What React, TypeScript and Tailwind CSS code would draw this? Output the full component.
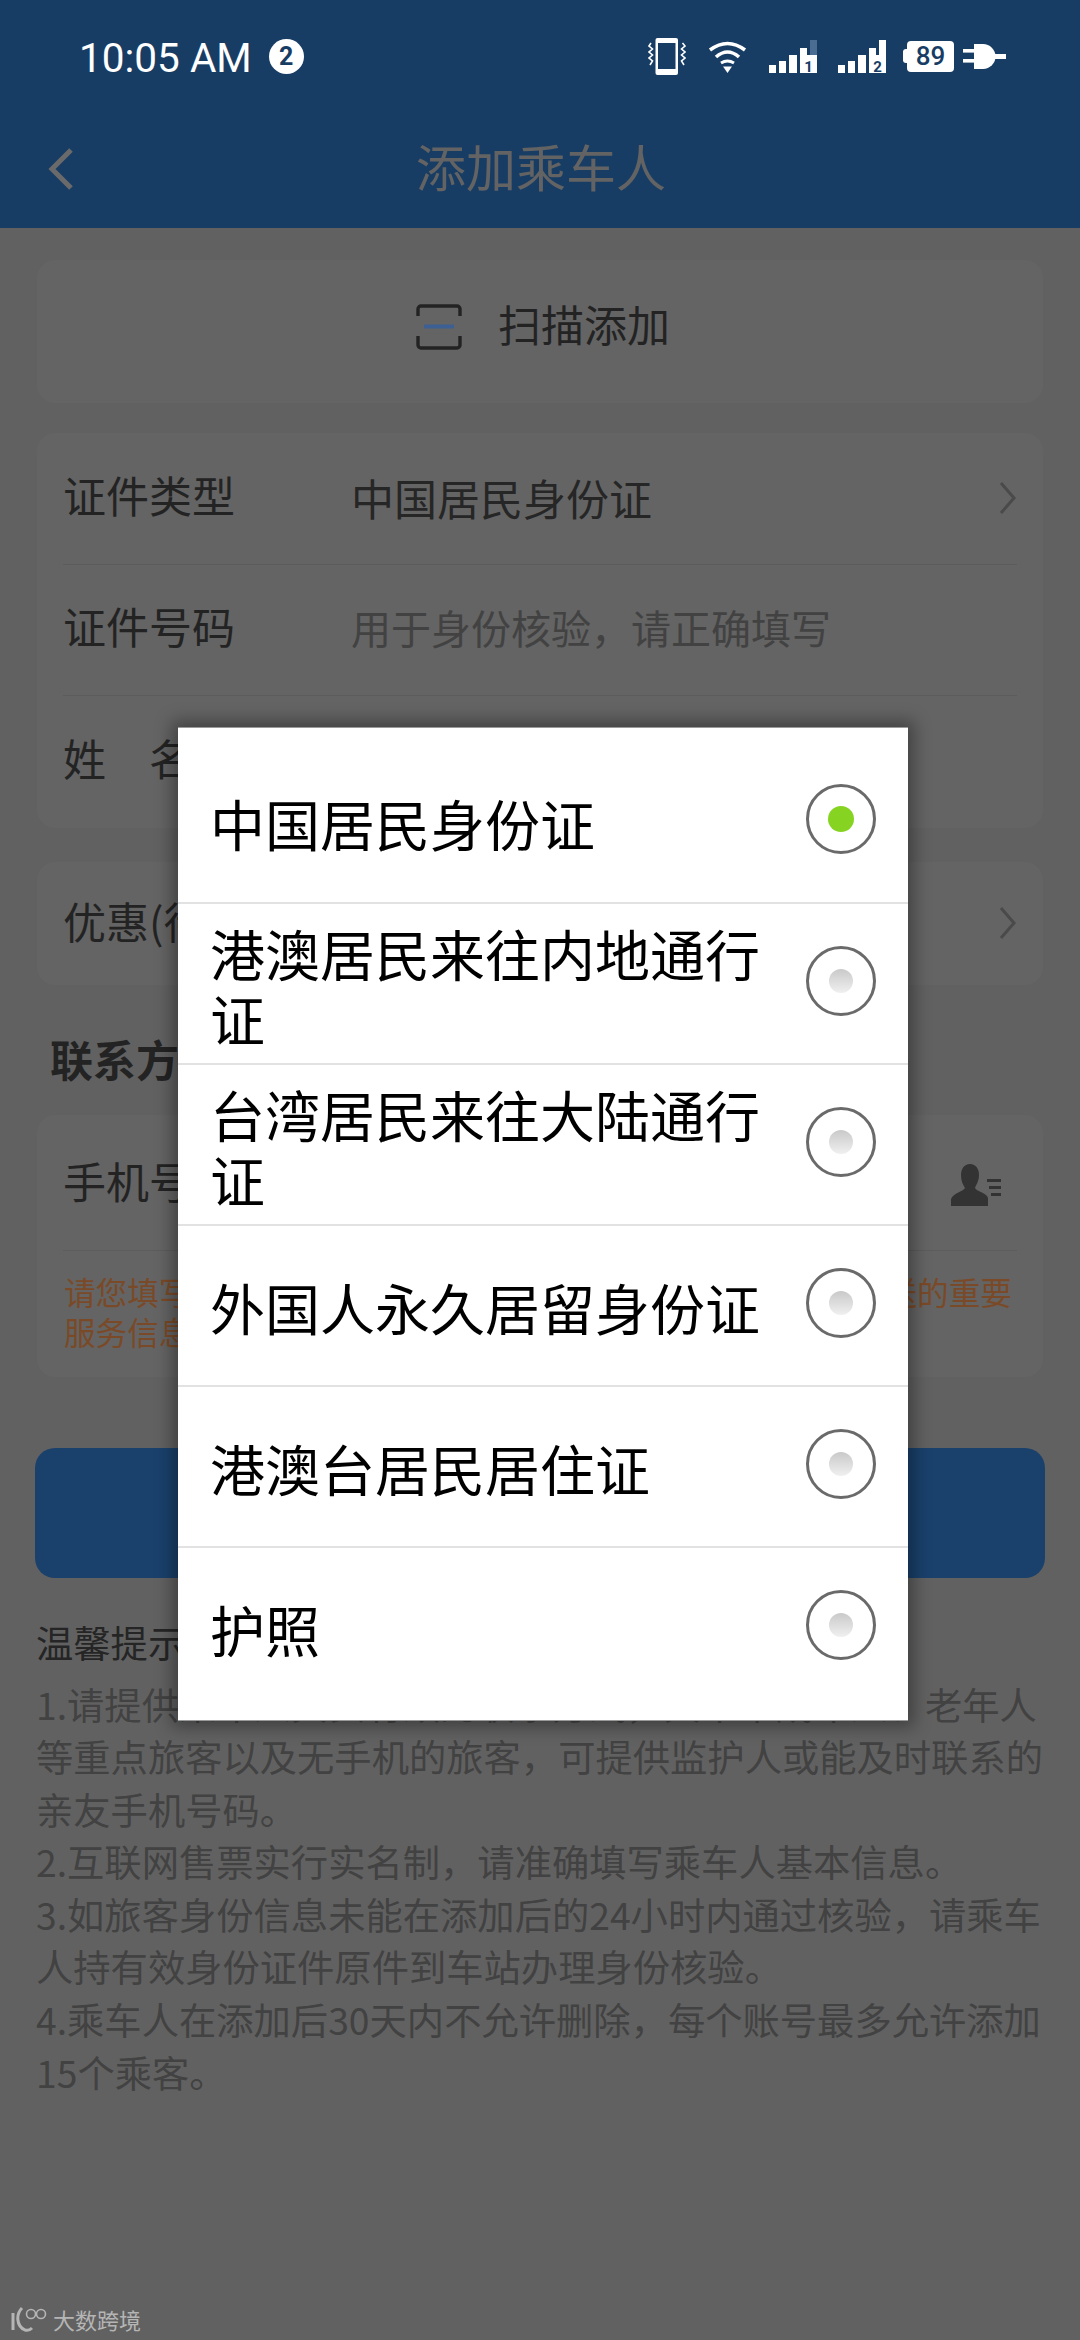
const cjk = "font-['Noto_Sans_CJK_SC','Noto_Sans',sans-serif]";

const idTypes = [
  "中国居民身份证",
  "港澳居民来往内地通行证",
  "台湾居民来往大陆通行证",
  "外国人永久居留身份证",
  "港澳台居民居住证",
  "护照",
];

const tips = [
  "1.请提供乘车人真实有效的联系方式，其中未成年人、老年人等重点旅客以及无手机的旅客，可提供监护人或能及时联系的亲友手机号码。",
  "2.互联网售票实行实名制，请准确填写乘车人基本信息。",
  "3.如旅客身份信息未能在添加后的24小时内通过核验，请乘车人持有效身份证件原件到车站办理身份核验。",
  "4.乘车人在添加后30天内不允许删除，每个账号最多允许添加15个乘客。",
];

function VibrateIcon() {
  return (
    <svg width="38" height="37" viewBox="0 0 38 37" fill="none">
      <rect x="7.5" y="0" width="22.5" height="37" rx="2" fill="#fff" />
      <rect x="10" y="5" width="17.5" height="26" fill="#183d65" />
      <path d="M3 5 L1 8 L4.5 11 L1 14 L4.5 17 L1 20 L4.5 23 L2 27" stroke="#fff" strokeWidth="1.6" />
      <path d="M34.5 5 L37 8 L33.5 11 L37 14 L33.5 17 L37 20 L33.5 23 L36 27" stroke="#fff" strokeWidth="1.6" />
    </svg>
  );
}

function WifiIcon() {
  return (
    <svg width="39" height="33" viewBox="0 0 39 33" fill="none" stroke="#fff" strokeWidth="3.6">
      <path d="M2 10 Q19.5 -3 37 10" />
      <path d="M8 17 Q19.5 7 31 17" />
      <path d="M13 23 Q19.5 19 26 23" strokeWidth="3" />
      <path d="M15 26.5 H24 L19.5 33 Z" fill="#fff" stroke="none" />
    </svg>
  );
}

function SignalIcon({ sim, dim }: { sim: string; dim?: boolean }) {
  return (
    <svg width="48" height="33" viewBox="0 0 48 33">
      <rect x="0" y="25" width="7" height="8" fill="#fff" />
      <rect x="10" y="21" width="7" height="12" fill="#fff" />
      <rect x="20" y="15" width="8" height="18" fill="#fff" />
      <rect x="31" y="8" width="7" height="9" fill="#fff" />
      <rect x="41" y="0" width="7" height="17" fill={dim ? "#4b6d92" : "#fff"} />
      <rect x="31" y="15" width="17" height="18" fill="#fff" />
      <text x="39.5" y="31.5" textAnchor="middle" fontSize="15" fontWeight="700" fontFamily="Roboto, sans-serif" fill="#183d65">
        {sim}
      </text>
    </svg>
  );
}

function PlugIcon() {
  return (
    <svg width="43" height="25" viewBox="0 0 43 25" fill="#fff">
      <rect x="0" y="5" width="12" height="3.6" />
      <rect x="0" y="15" width="12" height="3.6" />
      <path d="M11 0 H20 A12.5 12.5 0 0 1 20 25 H11 Z" />
      <rect x="31" y="10" width="12" height="5" />
    </svg>
  );
}

function Chevron() {
  return (
    <svg width="18" height="32" viewBox="0 0 18 32" fill="none" stroke="#4a4a4a" strokeWidth="3">
      <path d="M2 1 L15 16 L2 31" />
    </svg>
  );
}

function ScanIcon() {
  return (
    <svg width="46" height="46" viewBox="0 0 46 46" fill="none">
      <path d="M2 12 V5 A3 3 0 0 1 5 2 H41 A3 3 0 0 1 44 5 V12" stroke="#232323" strokeWidth="3.4" />
      <path d="M2 32 V41 A3 3 0 0 0 5 44 H41 A3 3 0 0 0 44 41 V32" stroke="#232323" strokeWidth="3.4" />
      <rect x="8" y="20.5" width="30" height="4" fill="#3c5f94" />
    </svg>
  );
}

function ContactIcon() {
  return (
    <svg width="52" height="42" viewBox="0 0 52 42" fill="#333">
      <path d="M19 0 C25 0 28 5 28 11 C28 17 25 21 24 24 C25 27 36 29 37 34 L37 42 H0 L0 35 C2 29 13 27 14 24 C12 21 10 17 10 11 C10 5 13 0 19 0 Z" />
      <rect x="36" y="15" width="14" height="3" />
      <rect x="38" y="22" width="12" height="3" />
      <rect x="40" y="29" width="10" height="3" />
    </svg>
  );
}

function WatermarkLogo() {
  return (
    <svg width="38" height="26" viewBox="0 0 38 26" fill="none" stroke="#b5b5b5">
      <path d="M3 7 V24" strokeWidth="3" />
      <path d="M12 2 C6 8 6 20 15 24 C18 25 20 24 22 22" strokeWidth="3" />
      <circle cx="21" cy="8" r="4.5" strokeWidth="1.6" />
      <circle cx="31" cy="8" r="4.5" strokeWidth="1.6" />
    </svg>
  );
}

function Row({ label, value, valueClass, chevron, last }: { label: string; value?: string; valueClass?: string; chevron?: boolean; last?: boolean }) {
  return (
    <div className={`mx-[26px] flex h-[131.5px] items-center ${last ? "" : "border-b border-[#5c5c5c]"}`}>
      <span className="mb-[8px] w-[288px] shrink-0 text-[43px] leading-none text-[#232323]">{label}</span>
      <span className={`flex-1 leading-none ${valueClass ?? "mb-[2px] text-[43px] text-[#262626]"}`}>{value}</span>
      {chevron && <Chevron />}
    </div>
  );
}

function Radio({ checked }: { checked?: boolean }) {
  return (
    <div className="mb-[6px] flex h-[70px] w-[70px] shrink-0 items-center justify-center rounded-full border-[3px] border-[#6a6a6a] bg-white">
      {checked ? (
        <div className="h-[26px] w-[26px] rounded-full bg-[#86d322]" />
      ) : (
        <div className="h-[24px] w-[24px] rounded-full bg-gradient-to-b from-[#c9c9c9] to-[#f0f0f0]" />
      )}
    </div>
  );
}

export default function App() {
  return (
    <div className={`relative h-[2340px] w-[1080px] overflow-hidden bg-[#616161] ${cjk}`}>
      <header className="h-[228px] bg-[#183d65]">
        <div className="flex h-[112px] items-center pl-[79px] pr-[74px]">
          <span className="mt-[4px] font-['Roboto',sans-serif] text-[40.5px] leading-none text-white">10:05 AM</span>
          <span className="ml-[17px] flex h-[35px] w-[35px] items-center justify-center rounded-full bg-white font-['Roboto',sans-serif] text-[25px] font-bold leading-none text-[#183d65]">
            2
          </span>
          <div className="ml-auto flex items-center">
            <VibrateIcon />
            <div className="ml-[22px]">
              <WifiIcon />
            </div>
            <div className="ml-[22px]">
              <SignalIcon sim="1" dim />
            </div>
            <div className="ml-[21px]">
              <SignalIcon sim="2" />
            </div>
            <div className="ml-[17px] flex items-center">
              <div className="h-[14px] w-[4px] rounded-l-[3px] bg-white" />
              <div className="flex h-[31px] w-[47px] items-center justify-center rounded-[4px] bg-white font-['Roboto',sans-serif] text-[26px] font-medium leading-none text-[#183d65]">
                89
              </div>
            </div>
            <div className="ml-[9px]">
              <PlugIcon />
            </div>
          </div>
        </div>
        <div className="grid h-[116px] grid-cols-[1fr_auto_1fr] items-center pl-[48px]">
          <svg width="26" height="42" viewBox="0 0 26 42" fill="none" stroke="#6a6a6a" strokeWidth="5" className="mb-[3px]">
            <path d="M23 2 L4 21 L23 40" />
          </svg>
          <h1 className="mb-[11px] pr-[46px] text-[50px] font-normal leading-none text-[#636363]">添加乘车人</h1>
          <div />
        </div>
      </header>

      <main className="flex flex-col px-[37px] pt-[32px]">
        <div className="flex h-[143px] items-center justify-center gap-[36px] rounded-[18px] bg-[#646464] pb-[10px] pl-[6px]">
          <ScanIcon />
          <span className="mb-[7px] text-[43px] leading-none text-[#232323]">扫描添加</span>
        </div>

        <section className="mt-[30px] rounded-[18px] bg-[#646464]">
          <Row label="证件类型" value="中国居民身份证" chevron />
          <Row label="证件号码" value="用于身份核验，请正确填写" valueClass="mb-[6px] text-[40px] text-[#424242]" />
          <Row label="姓　名" last />
        </section>

        <div className="mt-[34px] flex h-[123px] items-center rounded-[18px] bg-[#646464] px-[26px]">
          <span className="mb-[5px] flex-1 text-[43px] leading-none text-[#232323]">优惠(待遇)类型</span>
          <Chevron />
        </div>

        <h2 className="mt-[50px] pl-[13px] text-[43px] font-bold leading-[46px] text-[#232323]">联系方式</h2>

        <section className="mt-[34px] h-[262px] rounded-[18px] bg-[#646464]">
          <div className="mx-[26px] flex h-[136px] items-center border-b border-[#5c5c5c]">
            <span className="mb-[3px] flex-1 text-[43px] leading-none text-[#232323]">手机号码</span>
            <div className="mr-[14px] mt-[6px]">
              <ContactIcon />
            </div>
          </div>
          <p className="mx-[27px] mt-[20px] whitespace-nowrap text-[31.6px] leading-[40px] text-[#7a4a28]">
            请您填写乘车人真实有效的手机号码，以便接收铁路部门发送的重要
            <br />
            服务信息。
          </p>
        </section>

        <button className="mx-[-2px] mt-[71px] h-[130px] rounded-[20px] bg-[#1a416c] text-[46px] text-[#8d8d8d]">保存</button>

        <h3 className="mx-[-1px] mt-[38px] text-[37.3px] font-normal leading-[52px] text-[#252525]">温馨提示</h3>
        <div className="mx-[-2px] mt-[10px] pl-[1px] text-[37.3px] leading-[52.6px] text-[#424242]">
          {tips.map((tip) => (
            <p key={tip}>{tip}</p>
          ))}
        </div>
      </main>

      <div className="absolute left-[178px] top-[727px] w-[730px] border-y border-[#9a9a9a] bg-white py-[13px] shadow-[0_0_16px_6px_rgba(0,0,0,0.35)]">
        {idTypes.map((name, i) => (
          <div
            key={name}
            className={`flex h-[161px] items-center justify-between pl-[32px] pr-[32px] ${i > 0 ? "border-t-2 border-[#e2e2e2]" : ""}`}
          >
            <span className="w-[560px] pt-[2px] text-[55px] leading-[65px] text-black">{name}</span>
            <Radio checked={i === 0} />
          </div>
        ))}
      </div>

      <div className="absolute bottom-[8px] left-[10px] flex items-center gap-[5px]">
        <WatermarkLogo />
        <span className="text-[22px] leading-none text-[#b5b5b5]">大数跨境</span>
      </div>
    </div>
  );
}
